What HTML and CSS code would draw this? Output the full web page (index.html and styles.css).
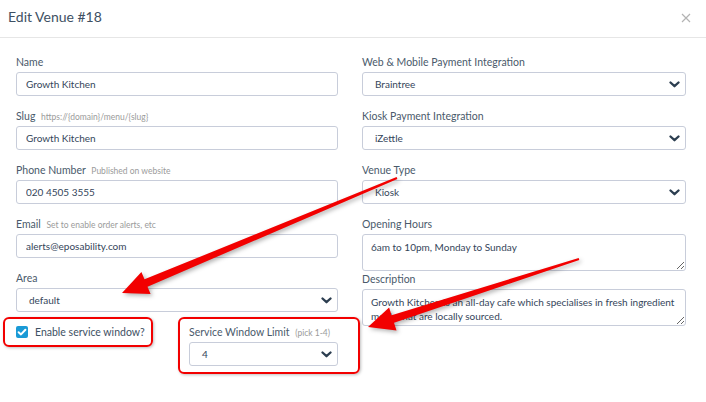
FILE: index.html
```html
<!DOCTYPE html>
<html lang="en">
<head>
  <meta charset="UTF-8">
  <meta name="viewport" content="width=device-width, initial-scale=1.0">
  <title>Edit Venue #18</title>
  <link rel="stylesheet" href="styles.css">
</head>
<body>
  <div class="modal">
    <header class="modal-header">
      <h2>Edit Venue #18</h2>
      <svg class="close" width="10" height="10" viewBox="0 0 10 10">
        <path d="M1 1 L9 9 M9 1 L1 9" stroke="#b3b3b3" stroke-width="1.2" fill="none"/>
      </svg>
    </header>

    <div class="modal-body">
      <div class="col">
        <div class="field">
          <label>Name</label>
          <input class="control" type="text" value="Growth Kitchen" readonly>
        </div>
        <div class="field">
          <label>Slug <span class="hint">https://{domain}/menu/{slug}</span></label>
          <input class="control" type="text" value="Growth Kitchen" readonly>
        </div>
        <div class="field">
          <label>Phone Number <span class="hint">Published on website</span></label>
          <input class="control" type="text" value="020 4505 3555" readonly>
        </div>
        <div class="field">
          <label>Email <span class="hint">Set to enable order alerts, etc</span></label>
          <input class="control" type="text" value="alerts@eposability.com" readonly>
        </div>
        <div class="field">
          <label>Area</label>
          <div class="control select">
            <span>default</span>
            <svg class="chevron" width="11" height="7" viewBox="0 0 11 7"><path d="M1.5 1.5 L5.5 5.2 L9.5 1.5" /></svg>
          </div>
        </div>

        <div class="split">
          <label class="check">
            <span class="box">
              <svg width="12" height="12" viewBox="0 0 12 12"><path d="M2.6 6.2 L5 8.4 L9.4 3.8" /></svg>
            </span>
            Enable service window?
          </label>
          <div class="field">
            <label>Service Window Limit <span class="hint">(pick 1-4)</span></label>
            <div class="control select">
              <span>4</span>
              <svg class="chevron" width="11" height="7" viewBox="0 0 11 7"><path d="M1.5 1.5 L5.5 5.2 L9.5 1.5" /></svg>
            </div>
          </div>
        </div>
      </div>

      <div class="col">
        <div class="field">
          <label>Web &amp; Mobile Payment Integration</label>
          <div class="control select">
            <span>Braintree</span>
            <svg class="chevron" width="11" height="7" viewBox="0 0 11 7"><path d="M1.5 1.5 L5.5 5.2 L9.5 1.5" /></svg>
          </div>
        </div>
        <div class="field">
          <label>Kiosk Payment Integration</label>
          <div class="control select">
            <span>iZettle</span>
            <svg class="chevron" width="11" height="7" viewBox="0 0 11 7"><path d="M1.5 1.5 L5.5 5.2 L9.5 1.5" /></svg>
          </div>
        </div>
        <div class="field">
          <label>Venue Type</label>
          <div class="control select">
            <span>Kiosk</span>
            <svg class="chevron" width="11" height="7" viewBox="0 0 11 7"><path d="M1.5 1.5 L5.5 5.2 L9.5 1.5" /></svg>
          </div>
        </div>
        <div class="field tight">
          <label>Opening Hours</label>
          <textarea class="control" readonly>6am to 10pm, Monday to Sunday</textarea>
        </div>
        <div class="field">
          <label>Description</label>
          <textarea class="control" readonly>Growth Kitchen is an all-day cafe which specialises in fresh ingredient meals that are locally sourced.</textarea>
        </div>
      </div>
    </div>

    <!-- screenshot annotations -->
    <div class="annot annot-check"></div>
    <div class="annot annot-limit"></div>
    <svg class="arrows" width="706" height="402" viewBox="0 0 706 402">
      <polygon points="396.6,177.1 144.5,279.3 141.4,271.9 122,293 150.6,294.1 147.5,286.7 397.4,178.9" />
      <polygon points="578.7,258 391.6,315.2 389.1,307.6 368,327 396.5,330.4 394,322.8 579.3,260" />
    </svg>
  </div>
</body>
</html>
```

FILE: styles.css
```css
:root {
  --text-color: #3e5063;
  --label-color: #4a5a6b;
  --input-text: #34455a;
  --chevron-color: #2c3e50;
  --border-color: #c8cdda;
  --hint-color: #9b9b9b;
  --check-color: #1a9ad6;
  --annot-red: #f20000;
}

body {
  margin: 0;
  font-family: 'Lato', sans-serif;
  background: #fff;
  width: 706px;
  height: 402px;
  overflow: hidden;
}

.modal {
  position: relative;
  height: 402px;
}

.modal-header {
  height: 38px;
  box-sizing: border-box;
  border-bottom: 1px solid #e6e6e6;
  display: flex;
  justify-content: space-between;
  align-items: center;
  padding: 0 15px 4px 8px;
}

.modal-header h2 {
  margin: 0;
  font-size: 14px;
  font-weight: 400;
  color: var(--text-color);
}

.close {
  display: block;
  margin-top: 2px;
}

.modal-body {
  display: grid;
  grid-template-columns: 322px 324px;
  column-gap: 24px;
  padding: 17px 20px 0 16px;
}

.field {
  margin-bottom: 13px;
}

.field.tight {
  margin-bottom: 1px;
}

.field label {
  display: block;
  height: 14px;
  font-size: 10.5px;
  line-height: 14px;
  color: var(--label-color);
  margin-bottom: 3px;
  white-space: nowrap;
}

.hint {
  font-size: 8.5px;
  line-height: 1;
  color: var(--hint-color);
  margin-left: 3px;
}

.control {
  box-sizing: border-box;
  width: 100%;
  height: 24px;
  margin: 0;
  border: 1px solid var(--border-color);
  border-radius: 3px;
  padding: 0 9px;
  font-family: 'Lato', sans-serif;
  font-size: 10px;
  color: var(--input-text);
  background: #fff;
  outline: none;
}

.select {
  display: flex;
  justify-content: space-between;
  align-items: center;
  padding: 0 5px 0 12px;
}

.chevron path {
  fill: none;
  stroke: var(--chevron-color);
  stroke-width: 2.3;
  stroke-linecap: round;
  stroke-linejoin: round;
}

textarea.control {
  display: block;
  height: 37px;
  padding: 5px 8px;
  line-height: 14px;
  resize: vertical;
  overflow: hidden;
}

.split {
  display: grid;
  grid-template-columns: 149px 149px;
  column-gap: 24px;
}

.check {
  display: flex;
  align-items: center;
  height: 14px;
  font-size: 10.5px;
  color: var(--text-color);
  white-space: nowrap;
}

.check .box {
  width: 12px;
  height: 12px;
  border-radius: 2px;
  background: var(--check-color);
  margin-right: 7px;
  flex: none;
}

.check .box svg {
  display: block;
}

.check .box path {
  fill: none;
  stroke: #fff;
  stroke-width: 2;
  stroke-linecap: round;
  stroke-linejoin: round;
}

/* red annotations drawn over the screenshot */
.annot {
  position: absolute;
  box-sizing: border-box;
  border: 2px solid var(--annot-red);
  border-radius: 6px;
  box-shadow: 1px 1px 3px rgba(0, 0, 0, 0.25);
}

.annot-check {
  left: 3px;
  top: 317px;
  width: 150px;
  height: 30px;
}

.annot-limit {
  left: 178px;
  top: 317px;
  width: 182px;
  height: 57px;
}

.arrows {
  position: absolute;
  top: 0;
  left: 0;
  pointer-events: none;
  filter: drop-shadow(2px 2px 2px rgba(0, 0, 0, 0.3));
}

.arrows polygon {
  fill: var(--annot-red);
}
```
